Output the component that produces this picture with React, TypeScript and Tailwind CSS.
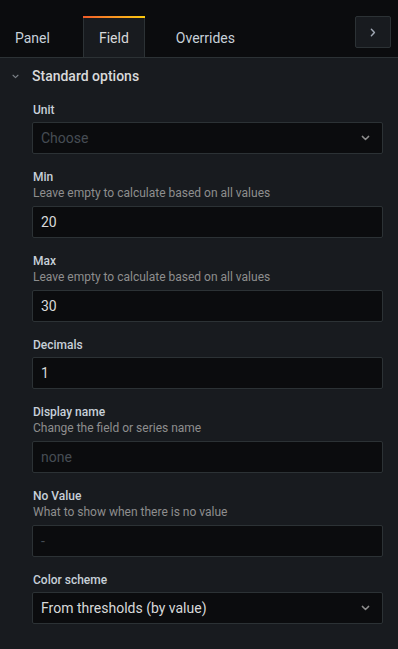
import React from 'react';

type Field = {
  label: string;
  description?: string;
  value?: string;
  placeholder?: string;
  select?: boolean;
};

const fields: Field[] = [
  { label: 'Unit', placeholder: 'Choose', select: true },
  { label: 'Min', description: 'Leave empty to calculate based on all values', value: '20' },
  { label: 'Max', description: 'Leave empty to calculate based on all values', value: '30' },
  { label: 'Decimals', value: '1' },
  { label: 'Display name', description: 'Change the field or series name', placeholder: 'none' },
  { label: 'No Value', description: 'What to show when there is no value', placeholder: '-' },
  { label: 'Color scheme', value: 'From thresholds (by value)', select: true },
];

const ChevronDown = ({ className }: { className?: string }) => (
  <svg viewBox="0 0 10 6" className={className} fill="none" stroke="currentColor" strokeWidth="1.6" strokeLinecap="round" strokeLinejoin="round">
    <path d="M1.5 1.2 5 4.6 8.5 1.2" />
  </svg>
);

const ChevronRight = ({ className }: { className?: string }) => (
  <svg viewBox="0 0 6 10" className={className} fill="none" stroke="currentColor" strokeWidth="1.6" strokeLinecap="round" strokeLinejoin="round">
    <path d="M1.2 1.5 4.6 5 1.2 8.5" />
  </svg>
);

const FieldRow = ({ field }: { field: Field }) => (
  <div className="mb-4">
    <div className="mb-1 pl-[1px]">
      <div className="text-[12px] leading-[15px] font-medium text-[#c7d0d9]">{field.label}</div>
      {field.description && (
        <div className="text-[12px] leading-[17px] text-[#8e8e8e]">{field.description}</div>
      )}
    </div>
    <div className="flex h-8 items-center rounded-[2px] border border-[#2c3235] bg-[#0b0c0e] pl-2 pr-3">
      <span className={`flex-1 text-[14px] ${field.value ? 'text-[#d8d9da]' : 'text-[#464c54]'}`}>
        {field.value ?? field.placeholder}
      </span>
      {field.select && <ChevronDown className="h-[6px] w-[9px] text-[#8e8e8e]" />}
    </div>
  </div>
);

const App = () => {
  return (
    <div className="h-[649px] w-[398px] overflow-hidden bg-[#181b1f] font-['Roboto',sans-serif]">
      {/* Tabs bar */}
      <div className="flex h-[58px] items-end border-b border-[#2c3235] bg-[#0b0c0e] pr-[7px]">
        <div className="flex gap-[16px]">
          <div className="flex h-[41px] items-center pl-[15px] pr-[17px] pt-[4px] text-[14px] text-[#c7d0d9]">Panel</div>
          <div className="relative -mb-px flex h-[41px] items-center border-x border-[#2c3235] bg-[#181b1f] px-[15px] pt-[4px] text-[14px] text-[#d8d9da]">
            <div className="absolute -left-px -right-px top-0 h-[2px] bg-gradient-to-r from-[#f05a28] to-[#fbca0a]" />
            Field
          </div>
          <div className="flex h-[41px] items-center px-[15px] pt-[4px] text-[14px] text-[#c7d0d9]">Overrides</div>
        </div>
        <div className="ml-auto mb-[9px] flex h-[32px] w-[36px] items-center justify-center rounded-[2px] border border-[#2c3235] bg-[#181b1f]">
          <ChevronRight className="h-[9px] w-[6px] text-[#9fa7b3]" />
        </div>
      </div>

      {/* Standard options */}
      <div className="flex h-[36px] items-center px-3 pt-[1px]">
        <ChevronDown className="h-[5px] w-[7px] text-[#7b8087]" />
        <span className="ml-[13px] text-[14px] font-medium text-[#d8d9da]">Standard options</span>
      </div>

      <div className="pl-8 pr-[15px] pt-[9px]">
        {fields.map((f) => (
          <FieldRow key={f.label} field={f} />
        ))}
      </div>
    </div>
  );
};

export default App;
